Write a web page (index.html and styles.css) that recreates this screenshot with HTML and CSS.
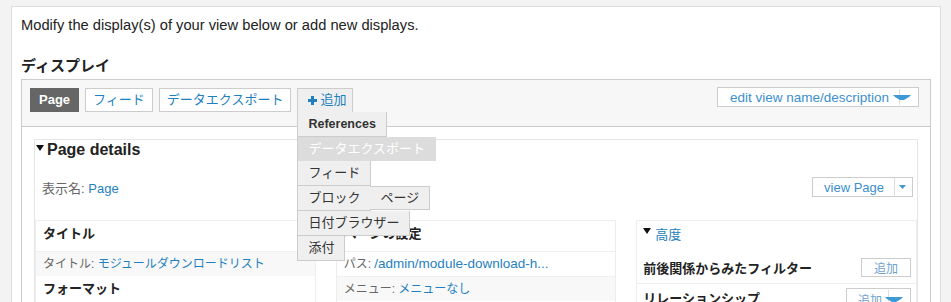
FILE: index.html
```html
<!DOCTYPE html>
<html lang="ja">
  <head>
    <meta charset="UTF-8" />
    <meta name="viewport" content="width=device-width, initial-scale=1.0" />
    <title>Views UI - displays</title>
    <link rel="stylesheet" href="styles.css">
  </head>
  <body>
    <div class="page">
      <p class="intro">Modify the display(s) of your view below or add new displays.</p>

      <h2 class="section-title">ディスプレイ</h2>
      <div class="displays">
        <div class="tabs-bar">
          <ul class="tabs">
            <li class="tab is-active">Page</li>
            <li class="tab"><a href="#">フィード</a></li>
            <li class="tab"><a href="#">データエクスポート</a></li>
            <li class="tab tab-add">
              <a href="#"><span class="plus"></span>追加</a>
              <ul class="add-menu">
                <li class="menu-strong">References</li>
                <li class="is-hover">データエクスポート</li>
                <li>フィード</li>
                <li class="has-sub">ブロック<span class="submenu">ページ</span></li>
                <li>日付ブラウザー</li>
                <li>添付</li>
              </ul>
            </li>
          </ul>
          <div class="split-button edit-button">
            <span class="split-label">edit view name/description</span>
            <span class="split-toggle wide">
              <svg width="18" height="5" viewBox="0 0 18 5"><polygon points="0,0 18,0 16,2 11,5 7,5 2,2" fill="#3d9ad6"/></svg>
            </span>
          </div>
        </div>

        <div class="displays-body">
          <div class="details">
            <div class="details-title"><span class="caret"></span>Page details</div>
            <div class="details-meta">
              <div class="meta-item"><span class="label">表示名:</span> <a href="#">Page</a></div>
              <div class="split-button view-button">
                <span class="split-label">view Page</span>
                <span class="split-toggle small">
                  <svg width="7" height="4" viewBox="0 0 7 4"><polygon points="0,0 7,0 3.5,4" fill="#3d9ad6"/></svg>
                </span>
              </div>
            </div>

            <div class="columns">
              <div class="column">
                <div class="col-title">タイトル</div>
                <div class="col-row is-odd"><span class="label">タイトル:</span> <a href="#">モジュールダウンロードリスト</a></div>
                <div class="col-title">フォーマット</div>
              </div>

              <div class="column">
                <div class="col-title">ページの設定</div>
                <div class="col-row"><span class="label">パス:</span> <a class="path" href="#">/admin/module-download-h...</a></div>
                <div class="col-row is-odd"><span class="label">メニュー:</span> <a href="#">メニューなし</a></div>
              </div>

              <div class="column">
                <div class="col-title col-toggle"><span class="caret"></span><a href="#">高度</a></div>
                <div class="col-section">
                  <span>前後関係からみたフィルター</span>
                  <span class="small-button">追加</span>
                </div>
                <div class="col-section is-last">
                  <span>リレーションシップ</span>
                  <span class="small-button split">追加<span class="split-toggle wide">
                    <svg width="18" height="5" viewBox="0 0 18 5"><polygon points="0,0 18,0 16,2 11,5 7,5 2,2" fill="#3d9ad6"/></svg>
                  </span></span>
                </div>
              </div>
            </div>
          </div>
        </div>
      </div>
    </div>
  </body>
</html>
```

FILE: styles.css
```css
* {
  box-sizing: border-box;
}
body {
  margin: 0;
  font-family: "Liberation Sans", "Noto Sans CJK JP", sans-serif;
  font-size: 13px;
  color: #222;
  background-color: #f3f3f3;
  overflow: hidden;
}
a {
  color: #1f7fc0;
  text-decoration: none;
}
ul {
  list-style: none;
  margin: 0;
  padding: 0;
}
.page {
  margin: 6px 0 0 11px;
  width: 930px;
  min-height: 400px;
  padding: 8px 9px 0;
  background: #fff;
  border: 1px solid #ddd;
}
.intro {
  margin: 0;
  font-size: 14.7px;
  line-height: 20px;
}
.section-title {
  margin: 21px 0 3px;
  font-size: 15px;
  line-height: 20px;
}

/* display tabs */
.displays {
  border: 1px solid #ccc;
  min-height: 300px;
}
.tabs-bar {
  display: flex;
  align-items: flex-start;
  padding: 8px 11px 14px 8px;
  background: #f7f7f7;
  border-bottom: 1px solid #ccc;
}
.tabs {
  display: flex;
  gap: 6px;
}
.tab {
  height: 24px;
  line-height: 22px;
  padding: 0 7px;
  border: 1px solid #ccc;
  background: #fff;
  white-space: nowrap;
}
.tab.is-active {
  padding: 0 8px;
  background: #666;
  border-color: #666;
  color: #fff;
  font-weight: bold;
}
.tab-add {
  position: relative;
  padding: 0 6px 0 10px;
  background: #efefef;
  border-bottom: none;
}
.plus {
  display: inline-block;
  position: relative;
  width: 9px;
  height: 9px;
  margin-right: 3px;
  vertical-align: -1px;
}
.plus::before,
.plus::after {
  content: "";
  position: absolute;
  background: #1f7fc0;
}
.plus::before {
  left: 0;
  top: 3px;
  width: 9px;
  height: 3px;
}
.plus::after {
  left: 3px;
  top: 0;
  width: 3px;
  height: 9px;
}
.add-menu {
  position: absolute;
  top: 23px;
  left: -1px;
  z-index: 5;
}
.add-menu li {
  position: relative;
  width: max-content;
  height: 25px;
  line-height: 24px;
  padding: 0 10px;
  background: #efefef;
  color: #333;
  border: 1px solid #ccc;
  border-top: none;
}
.add-menu .menu-strong {
  font-weight: bold;
  font-size: 12.5px;
  color: #333;
}
.add-menu .is-hover {
  height: 24px;
  background: #dcdcdc;
  color: #fff;
  border-bottom: none;
  border-right-color: #dcdcdc;
}
.submenu {
  position: absolute;
  left: 100%;
  top: 0;
  height: 24px;
  line-height: 22px;
  padding: 0 10px;
  background: #efefef;
  border: 1px solid #ccc;
  border-left: none;
  white-space: nowrap;
}

/* split buttons */
.split-button {
  display: flex;
  align-items: center;
  height: 20px;
  background: #fff;
  border: 1px solid #ccc;
  color: #3c8fcf;
}
.edit-button {
  margin: -1px 0 0 auto;
  font-size: 13.5px;
}
.edit-button .split-label {
  padding: 0 4px 0 12px;
}
.split-toggle {
  position: relative;
  display: flex;
  align-items: center;
  height: 100%;
}
.split-toggle.wide {
  padding-right: 7px;
}
.split-toggle.wide::before {
  content: "";
  position: absolute;
  left: 6px;
  top: 1px;
  bottom: 1px;
  border-left: 1px solid #ddd;
}
.split-toggle.wide svg {
  position: relative;
}
.split-toggle.small {
  padding: 0 6px 0 4px;
  border-left: 1px solid #ddd;
}
.view-button .split-label {
  padding: 0 10px 0 11px;
}

/* details */
.displays-body {
  padding: 12px;
  background: #fff;
}
.details {
  border: 1px solid #e5e5e5;
  min-height: 200px;
}
.details-title {
  padding-left: 1px;
  font-size: 16px;
  line-height: 20px;
  font-weight: bold;
}
.caret {
  display: inline-block;
  width: 0;
  height: 0;
  margin-right: 3px;
  border-left: 4px solid transparent;
  border-right: 4px solid transparent;
  border-top: 6px solid #111;
  vertical-align: 4px;
}
.details-meta {
  display: flex;
  justify-content: space-between;
  align-items: center;
  margin: 17px 4px 0 7px;
  height: 20px;
}
.label {
  color: #666;
}
.meta-item {
  font-size: 13px;
}
.columns {
  display: grid;
  grid-template-columns: repeat(3, 1fr);
  gap: 20px;
  margin-top: 23px;
}
.column {
  border: 1px solid #ededed;
  border-bottom: none;
  min-height: 90px;
}
.col-title {
  height: 30px;
  line-height: 26px;
  padding: 0 7px;
  font-weight: bold;
}
.col-row {
  height: 25px;
  line-height: 24px;
  padding: 0 7px;
  font-size: 12px;
  border-top: 1px solid #f0f0f0;
  white-space: nowrap;
}
.col-row .path {
  font-size: 13.5px;
}
.col-row.is-odd {
  background: #f8f8f8;
}
.col-toggle {
  padding-left: 6px;
  font-weight: normal;
  line-height: 28px;
}
.col-toggle .caret {
  margin-right: 4px;
  vertical-align: 5px;
}
.col-section {
  display: flex;
  justify-content: space-between;
  align-items: center;
  height: 33px;
  padding: 0 5px 0 6px;
  font-weight: bold;
  border-bottom: 1px solid #ededed;
}
.col-section.is-last {
  align-items: flex-start;
  padding-top: 4px;
  border-bottom: none;
}
.small-button {
  display: flex;
  align-items: center;
  height: 19px;
  padding: 0 12px;
  background: #fff;
  border: 1px solid #ccc;
  font-size: 12px;
  font-weight: normal;
  color: #6fa1cc;
}
.small-button.split {
  height: 22px;
  padding: 0 0 0 11px;
}
.small-button.split .split-toggle.wide {
  padding-left: 3px;
}
```
